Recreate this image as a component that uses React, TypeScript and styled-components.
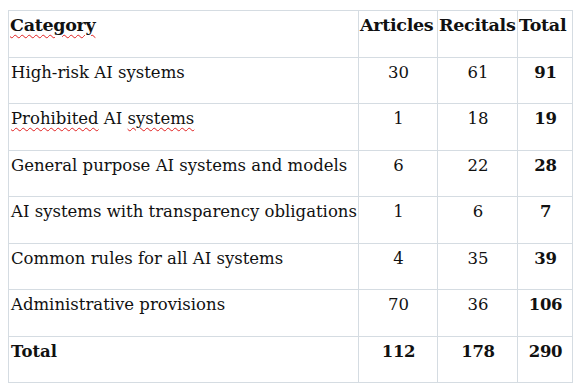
import React from "react";
import styled, { createGlobalStyle } from "styled-components";

const Global = createGlobalStyle`
  html, body { margin: 0; padding: 0; background: #ffffff; }
  body { font-family: "DejaVu Serif", "Liberation Serif", serif; color: #111; overflow: hidden; }
`;

const Page = styled.div`
  padding: 10px 0 0 8px;
  width: 584px;
  height: 388px;
  box-sizing: border-box;
  overflow: hidden;
`;

const Table = styled.table`
  border-collapse: collapse;
  table-layout: fixed;
  width: 564px;
  font-size: 16.5px;
`;

const Col = styled.col<{ $w: number }>`
  width: ${(p) => p.$w}px;
`;

const Row = styled.tr`
  height: 46.5px;
`;

const Cell = styled.td<{ $center?: boolean; $bold?: boolean }>`
  border: 1px solid #d5dce2;
  vertical-align: top;
  padding: 4px 1px 0 2px;
  line-height: 22px;
  white-space: nowrap;
  overflow: hidden;
  text-align: ${(p) => (p.$center ? "center" : "left")};
  font-weight: ${(p) => (p.$bold ? 700 : 400)};
  letter-spacing: ${(p) => (p.$bold && p.$center ? "-0.3px" : "0")};
`;

const HeadCell = styled.th`
  border: 1px solid #d5dce2;
  vertical-align: top;
  padding: 3px 0 0 1px;
  line-height: 22px;
  font-size: 17.5px;
  white-space: nowrap;
  overflow: hidden;
  font-weight: 700;
  text-align: left;
  letter-spacing: -0.3px;
`;

const Spell = styled.span`
  text-decoration: underline wavy #e02020;
  text-decoration-thickness: 1px;
  text-underline-offset: 3px;
`;

const Note = styled.p`
  margin: 4px 0 0 2px;
  font-size: 16.5px;
  line-height: 22px;
  white-space: nowrap;
`;

const rows: { label: React.ReactNode; a: number; r: number; t: number }[] = [
  { label: "High-risk AI systems", a: 30, r: 61, t: 91 },
  {
    label: (
      <>
        <Spell>Prohibited</Spell> AI <Spell>systems</Spell>
      </>
    ),
    a: 1,
    r: 18,
    t: 19,
  },
  { label: "General purpose AI systems and models", a: 6, r: 22, t: 28 },
  { label: "AI systems with transparency obligations", a: 1, r: 6, t: 7 },
  { label: "Common rules for all AI systems", a: 4, r: 35, t: 39 },
  { label: "Administrative provisions", a: 70, r: 36, t: 106 },
];

export default function App() {
  return (
    <Page>
      <Global />
      <Table>
        <colgroup>
          <Col $w={350} />
          <Col $w={79} />
          <Col $w={80} />
          <Col $w={55} />
        </colgroup>
        <thead>
          <Row>
            <HeadCell>
              <Spell>Category</Spell>
            </HeadCell>
            <HeadCell>Articles</HeadCell>
            <HeadCell>Recitals</HeadCell>
            <HeadCell>Total</HeadCell>
          </Row>
        </thead>
        <tbody>
          {rows.map((row, i) => (
            <Row key={i}>
              <Cell>{row.label}</Cell>
              <Cell $center>{row.a}</Cell>
              <Cell $center>{row.r}</Cell>
              <Cell $center $bold>
                {row.t}
              </Cell>
            </Row>
          ))}
          <Row>
            <Cell $bold>Total</Cell>
            <Cell $center $bold>
              112
            </Cell>
            <Cell $center $bold>
              178
            </Cell>
            <Cell $center $bold>
              290
            </Cell>
          </Row>
        </tbody>
      </Table>
      <Note>
        With regard to AI systems, Article 3 defines the scope of their application in full.
      </Note>
    </Page>
  );
}
